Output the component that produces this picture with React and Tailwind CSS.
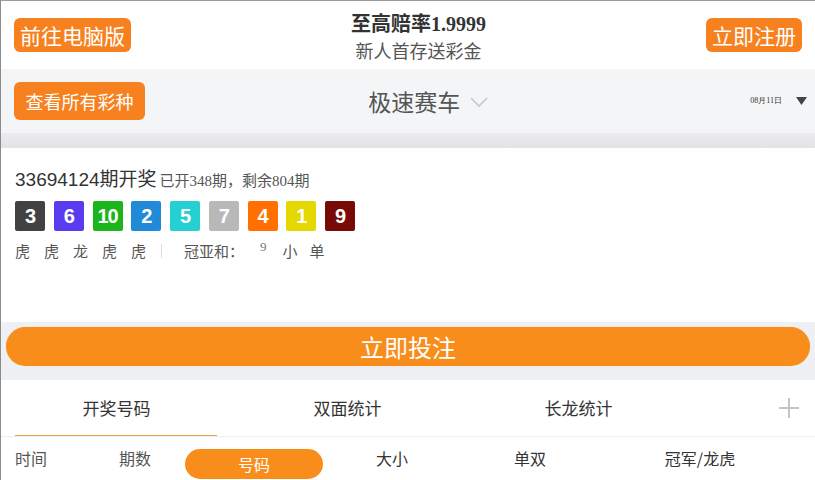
const CJK = "font-['Noto_Sans_CJK_SC','Noto_Sans',sans-serif]";

const balls = [
  { n: 3, c: "bg-[#424242]" },
  { n: 6, c: "bg-[#5a3cf0]" },
  { n: 10, c: "bg-[#1cb41c]" },
  { n: 2, c: "bg-[#1e8ad8]" },
  { n: 5, c: "bg-[#25d0d2]" },
  { n: 7, c: "bg-[#b8b8b8]" },
  { n: 4, c: "bg-[#ff7000]" },
  { n: 1, c: "bg-[#e4d800]" },
  { n: 9, c: "bg-[#780a06]" },
];

const Header = () => (
  <div className="h-[68px] flex items-center justify-between pl-[13px] pr-[13px] bg-white">
    <button className="h-[34px] px-[6px] rounded-[6px] bg-[#f7811f] text-white text-[21px] leading-none">
      前往电脑版
    </button>
    <div className="flex flex-col items-center pt-[2px]">
      <div className="text-[20px] leading-[24px] font-bold text-[#333]">
        至高赔率<span className="font-['Liberation_Serif',serif]">1.9999</span>
      </div>
      <div className="text-[18px] leading-[24px] text-[#555] mt-[2px]">新人首存送彩金</div>
    </div>
    <button className="h-[34px] px-[6px] rounded-[6px] bg-[#f7811f] text-white text-[21px] leading-none">
      立即注册
    </button>
  </div>
);

const LotteryBar = () => (
  <div className="h-[64px] bg-[#f4f5f7] flex items-center pl-[13px] pr-[8px]">
    <button className="h-[38px] w-[131px] rounded-[6px] bg-[#f7811f] text-white text-[18px] leading-none">
      查看所有彩种
    </button>
    <div className="flex-1 flex justify-center items-center gap-[10px] mr-[39px]">
      <span className="text-[23px] text-[#555]">极速赛车</span>
      <svg width="18" height="12" viewBox="0 0 18 12" className="mt-[2px]">
        <path d="M1 2 L9 10 L17 2" fill="none" stroke="#c8c8c8" strokeWidth="1.6" />
      </svg>
    </div>
    <div className="flex items-center gap-[14px]">
      <span className="text-[8px] text-[#333] font-['Liberation_Serif',serif]">08月11日</span>
      <svg width="11" height="8" viewBox="0 0 11 8">
        <path d="M0 0 L11 0 L5.5 8 Z" fill="#444" />
      </svg>
    </div>
  </div>
);

const Draw = () => (
  <div className="h-[174px] bg-white pl-[14px] pt-[16px]">
    <div className="flex items-baseline text-[#333] leading-[28px]">
      <span className="text-[19px] font-['Liberation_Sans',sans-serif]">33694124</span>
      <span className="text-[19px]">期开奖</span>
      <span className="text-[15px] text-[#555] ml-[3px]">
        已开<span className="font-['Liberation_Serif',serif]">348</span>期，剩余
        <span className="font-['Liberation_Serif',serif]">804</span>期
      </span>
    </div>
    <div className="flex gap-[8.75px] mt-[6px]">
      {balls.map((b, i) => (
        <div
          key={i}
          className={`w-[30px] h-[30px] rounded-[2px] ${b.c} text-white flex items-center justify-center text-[20px] font-bold font-['Liberation_Sans',sans-serif] tracking-[-1px]`}
        >
          {b.n}
        </div>
      ))}
    </div>
    <div className="flex items-center text-[15px] text-[#555] mt-[6px] leading-[28px]">
      <span className="tracking-[14px]">虎虎龙虎</span>
      <span>虎</span>
      <span className="w-px h-[14px] bg-[#ddd] ml-[15px] mr-[22px]" />
      <span>冠亚和：</span>
      <span className="ml-[16px] -mt-[8px] text-[13px] text-[#777] font-['Liberation_Serif',serif]">9</span>
      <span className="ml-[16px]">小</span>
      <span className="ml-[12px]">单</span>
    </div>
  </div>
);

export default function App() {
  return (
    <div className={`w-[815px] h-[480px] overflow-hidden bg-white border-t border-l border-t-[#9a9a9a] border-l-[#8a8a8a] ${CJK}`}>
      <Header />
      <LotteryBar />
      <div className="h-[15px] bg-gradient-to-b from-[#ececf0] to-[#e3e3e7]" />
      <Draw />
      <div className="h-[58px] bg-[#eff0f4] px-[5px] pt-[5px]">
        <button className="w-full h-[39px] rounded-full bg-[#f98d1b] text-white text-[24px] leading-none shadow-[0_0_1px_#fbc07a]">
          立即投注
        </button>
      </div>
      <div className="h-[57px] flex border-b border-[#eee] text-[17px] text-[#333]">
        <div className="w-[231px] flex flex-col">
          <div className="flex-1 flex items-center justify-center">开奖号码</div>
          <div className="h-px bg-[#f5a04a] ml-[14px] mr-[15px]" />
        </div>
        <div className="w-[231px] flex items-center justify-center">双面统计</div>
        <div className="w-[231px] flex items-center justify-center">长龙统计</div>
        <div className="flex-1 flex items-center justify-end pr-[15px]">
          <svg width="22" height="22" viewBox="0 0 22 22">
            <path d="M11 1 V21 M1 11 H21" stroke="#c4c4c4" strokeWidth="2" />
          </svg>
        </div>
      </div>
      <div className="flex items-center h-[42px] text-[16px] text-[#333]">
        <div className="w-[90px] pl-[14px] text-[#555]">时间</div>
        <div className="w-[94px] text-center text-[#555] pr-[6px]">期数</div>
        <div className="w-[138px] h-[30px] mt-[12px] rounded-full bg-[#f98d1b] text-white flex items-center justify-center">
          号码
        </div>
        <div className="w-[138px] text-center">大小</div>
        <div className="w-[138px] text-center">单双</div>
        <div className="flex-1 text-center pr-[14px]">冠军/龙虎</div>
      </div>
    </div>
  );
}
